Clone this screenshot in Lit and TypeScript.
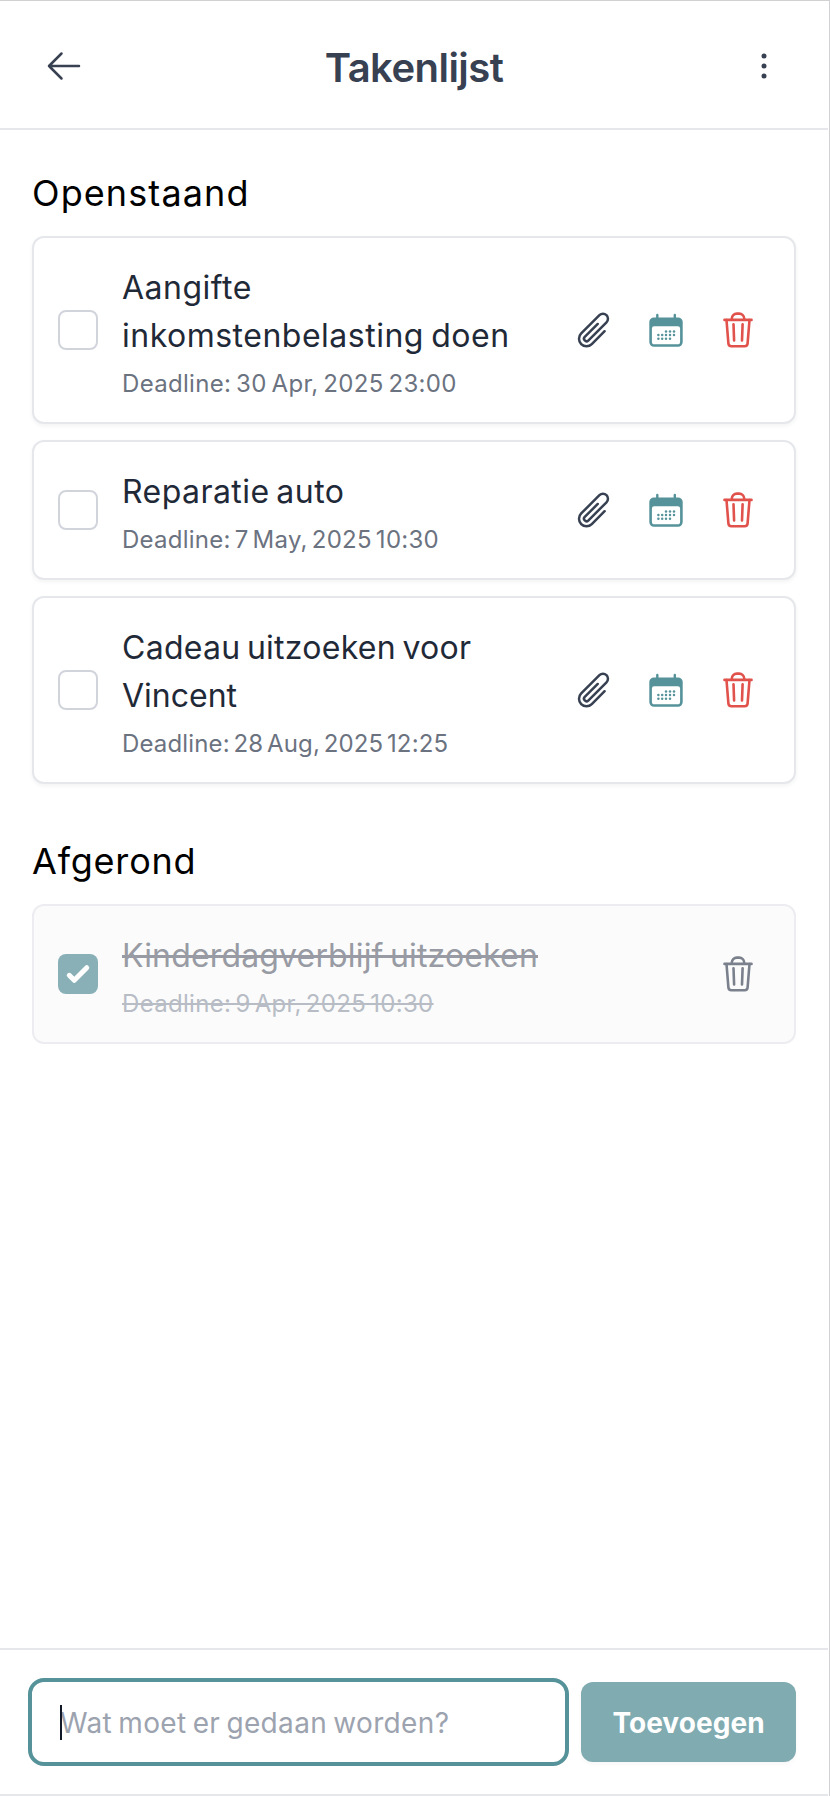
import { LitElement, html, css, svg, nothing } from "lit";
import { customElement, property, state } from "lit/decorators.js";
import { classMap } from "lit/directives/class-map.js";
import { styleMap } from "lit/directives/style-map.js";

interface Task {
  lines: string[];
  deadline: string;
  done?: boolean;
  // [letter-spacing, word-spacing] in px for each title line, then the deadline
  tracking: [number, number][];
}

const TASKS: Task[] = [
  {
    lines: ["Aangifte", "inkomstenbelasting doen"],
    deadline: "Deadline: 30 Apr, 2025 23:00",
    tracking: [[0.5, 0], [0.5, -2.2], [0.31, -2.2]],
  },
  {
    lines: ["Reparatie auto"],
    deadline: "Deadline: 7 May, 2025 10:30",
    tracking: [[0.45, -2.7], [0.25, -2.95]],
  },
  {
    lines: ["Cadeau uitzoeken voor", "Vincent"],
    deadline: "Deadline: 28 Aug, 2025 12:25",
    tracking: [[0.27, -2.8], [0, 0], [0.15, -3.2]],
  },
  {
    lines: ["Kinderdagverblijf uitzoeken"],
    deadline: "Deadline: 9 Apr, 2025 10:30",
    done: true,
    tracking: [[0.16, -2.8], [0.31, -2.9]],
  },
];

const spacing = ([letter, word]: [number, number]) =>
  styleMap({ letterSpacing: `${letter}px`, wordSpacing: `${word}px` });

const outline = (d: string) => svg`<path d=${d} fill="none" stroke="currentColor"
  stroke-width="1.5" stroke-linecap="round" stroke-linejoin="round"></path>`;

const backIcon = html`<svg viewBox="0 0 24 24">${outline("M10.5 19.5 3 12m0 0 7.5-7.5M3 12h18")}</svg>`;

const moreIcon = html`<svg viewBox="0 0 24 24">
  ${[6, 12, 18].map((y) => svg`<circle cx="12" cy=${y} r="1.5" fill="currentColor"></circle>`)}
</svg>`;

const clipIcon = html`<svg viewBox="0 0 24 24">${outline(
  "m18.375 12.739-7.693 7.693a4.5 4.5 0 0 1-6.364-6.364l10.94-10.94A3 3 0 1 1 19.5 7.372L8.552 18.32m.009-.01-.01.01m5.699-9.941-7.81 7.81a1.5 1.5 0 0 0 2.112 2.13"
)}</svg>`;

const CALENDAR_DOTS = [
  [20, 21.4], [24, 21.4], [28, 21.4],
  [12.4, 25], [16.2, 25], [20, 25], [24, 25], [28, 25],
  [12.4, 28.7], [16.2, 28.7], [20, 28.7], [24, 28.7],
];

const calendarIcon = html`<svg viewBox="0 0 40 40">
  <path fill="currentColor" fill-rule="evenodd"
    d="M8 7.4h24a4.7 4.7 0 0 1 4.7 4.7v20a4.7 4.7 0 0 1-4.7 4.7H8a4.7 4.7 0 0 1-4.7-4.7v-20A4.7 4.7 0 0 1 8 7.4z
       M8.2 16.2a2.3 2.3 0 0 0-2.3 2.3v13.2a2.6 2.6 0 0 0 2.6 2.6h23a2.6 2.6 0 0 0 2.6-2.6V18.5a2.3 2.3 0 0 0-2.3-2.3z"></path>
  <path d="M11.3 9V5M28.8 9V5" stroke="currentColor" stroke-width="2.4" stroke-linecap="round"></path>
  ${CALENDAR_DOTS.map(([x, y]) => svg`<circle cx=${x} cy=${y} r="1.25" fill="currentColor"></circle>`)}
</svg>`;

const trashIcon = html`<svg viewBox="0 0 40 40">
  <g fill="none" stroke="currentColor" stroke-width="2.6" stroke-linecap="round" stroke-linejoin="round">
    <path d="M6.5 9.9h27"></path>
    <path d="M8.5 10l1.9 23.4a3 3 0 0 0 3 2.8h13.2a3 3 0 0 0 3-2.8L31.5 10"></path>
    <path d="M13.8 9.6v-1a5 5 0 0 1 5-5h2.4a5 5 0 0 1 5 5v1"></path>
    <path d="M15.5 14.2l.6 16.3M24.6 14.2l-.6 16.3"></path>
  </g>
</svg>`;

const checkIcon = html`<svg viewBox="0 0 16 16">
  <path fill="#fff" d="M12.207 4.793a1 1 0 0 1 0 1.414l-5 5a1 1 0 0 1-1.414 0l-2-2a1 1 0 0 1 1.414-1.414L6.5 9.086l4.293-4.293a1 1 0 0 1 1.414 0z"></path>
</svg>`;

@customElement("task-card")
class TaskCard extends LitElement {
  static styles = css`
    :host { display: block; }
    .card {
      box-sizing: border-box;
      display: flex;
      align-items: center;
      gap: 24px;
      padding: 24px 36px 24px 24px;
      border: 2px solid #e5e7eb;
      border-radius: 12px;
      background: #fff;
      box-shadow: 0 2px 4px rgba(0, 0, 0, 0.05);
    }
    .card.done { background: #fbfbfb; border-color: #ededf1; box-shadow: none; }
    .box {
      box-sizing: border-box;
      flex: none;
      width: 40px;
      height: 40px;
      border: 2px solid #d1d5db;
      border-radius: 8px;
      background: #fff;
    }
    .done .box { border: 0; background: #89b0b7; }
    .body { flex: 1; white-space: nowrap; font-weight: 400; }
    .line {
      font-size: 32px;
      line-height: 48px;
      color: #1f2937;
      padding-top: 2px;
      margin-bottom: -2px;
    }
    .deadline {
      padding-top: 10px;
      margin-bottom: -2px;
      font-size: 24px;
      line-height: 32px;
      color: #6b7280;
    }
    .done .line { color: #989ba4; text-decoration: line-through; text-decoration-thickness: 3px; }
    .done .deadline { color: #b7bcc5; text-decoration: line-through; text-decoration-thickness: 2px; }
    .actions { display: flex; gap: 32px; }
    svg { display: block; width: 40px; height: 40px; }
    .clip { color: #374151; }
    .calendar { color: #569299; }
    .trash { color: #e0524b; }
    .done .trash { color: #7a808c; }
  `;

  @property({ attribute: false }) task!: Task;

  render() {
    const { lines, deadline, done, tracking } = this.task;
    return html`
      <div class=${classMap({ card: true, done: !!done })}>
        <div class="box">${done ? checkIcon : nothing}</div>
        <div class="body">
          ${lines.map((line, i) => html`<div class="line"><span style=${spacing(tracking[i])}>${line}</span></div>`)}
          <div class="deadline"><span style=${spacing(tracking[lines.length])}>${deadline}</span></div>
        </div>
        <div class="actions">
          ${done
            ? nothing
            : html`<span class="clip">${clipIcon}</span><span class="calendar">${calendarIcon}</span>`}
          <span class="trash">${trashIcon}</span>
        </div>
      </div>
    `;
  }
}

@customElement("app-root")
class AppRoot extends LitElement {
  static styles = css`
    :host {
      display: flex;
      flex-direction: column;
      box-sizing: border-box;
      height: 1796px;
      border-top: 1px solid #d1d1d3;
      border-right: 1px solid #d1d1d3;
      padding-right: 1px;
      background: #fff;
      font-family: Inter, "Open Sans", sans-serif;
    }
    header {
      display: flex;
      align-items: center;
      justify-content: space-between;
      box-sizing: border-box;
      height: 129px;
      padding: 2px 44px 0;
      border-bottom: 2px solid #e5e7eb;
      color: #374151;
    }
    header svg { display: block; width: 40px; height: 40px; }
    h1 {
      margin: 0;
      padding-top: 4px;
      font-size: 40px;
      line-height: 48px;
      font-weight: 600;
      letter-spacing: -0.55px;
    }
    main { flex: 1; padding: 37px 32px 0; }
    h2 {
      margin: 0 0 17px;
      font-size: 36px;
      line-height: 52px;
      font-weight: 440;
      color: #000;
      letter-spacing: 1.1px;
    }
    .open { margin-bottom: 51px; }
    .finished h2 { letter-spacing: 0.8px; }
    .list { display: flex; flex-direction: column; gap: 16px; }
    footer {
      display: flex;
      align-items: center;
      gap: 12px;
      box-sizing: border-box;
      height: 148px;
      padding: 0 32px 0 28px;
      border-top: 2px solid #e5e7eb;
      border-bottom: 2px solid #e5e7eb;
    }
    .field { position: relative; width: 541px; height: 88px; }
    input {
      box-sizing: border-box;
      width: 100%;
      height: 100%;
      padding: 1px 28px 0;
      border: 4px solid #569299;
      border-radius: 16px;
      outline: none;
      background: #fff;
      font: 400 28px Inter, "Open Sans", sans-serif;
      letter-spacing: 0.34px;
      word-spacing: -2px;
    }
    input::placeholder { color: #9ca3af; opacity: 1; }
    .caret { position: absolute; left: 32px; top: 27px; width: 2px; height: 35px; background: #111827; }
    button {
      flex: 1;
      height: 80px;
      padding: 1px 0 0;
      border: 0;
      border-radius: 12px;
      background: #80abb1;
      color: #fff;
      font: 700 28px Inter, "Open Sans", sans-serif;
      letter-spacing: 0.05px;
      box-shadow: 0 2px 4px rgba(0, 0, 0, 0.04);
    }
  `;

  @state() private tasks = TASKS;

  private list(done: boolean) {
    return html`<div class="list">
      ${this.tasks.filter((t) => !!t.done === done).map((t) => html`<task-card .task=${t}></task-card>`)}
    </div>`;
  }

  render() {
    return html`
      <header>${backIcon}<h1>Takenlijst</h1>${moreIcon}</header>
      <main>
        <section class="open"><h2>Openstaand</h2>${this.list(false)}</section>
        <section class="finished"><h2>Afgerond</h2>${this.list(true)}</section>
      </main>
      <footer>
        <div class="field">
          <input type="text" placeholder="Wat moet er gedaan worden?" />
          <span class="caret"></span>
        </div>
        <button>Toevoegen</button>
      </footer>
    `;
  }
}
